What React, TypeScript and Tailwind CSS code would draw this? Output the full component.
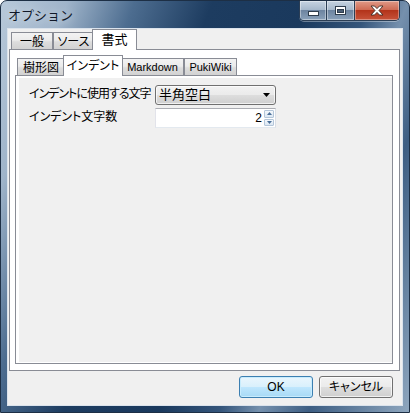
import type { ReactNode } from 'react'

function CaptionButtons() {
  return (
    <div className="mr-[9px] flex h-[20px] overflow-hidden rounded-b-[5px] border border-t-0 border-[#2b3e55] shadow-[0_1px_0_rgba(255,255,255,0.35)]">
      <div className="flex w-[27px] items-center justify-center border-r border-[#2b3e55] bg-[linear-gradient(#c6d3e1_0%,#a7b9cc_45%,#6d84a0_50%,#8aa1ba_100%)] shadow-[inset_0_0_0_1px_rgba(255,255,255,0.4)]">
        <svg width="11" height="5" viewBox="0 0 11 5" className="mt-[5px]">
          <rect x="0.5" y="0.5" width="10" height="4" fill="#fff" stroke="#2f3d4d" />
        </svg>
      </div>
      <div className="flex w-[28px] items-center justify-center border-r border-[#2b3e55] bg-[linear-gradient(#c6d3e1_0%,#a7b9cc_45%,#6d84a0_50%,#8aa1ba_100%)] shadow-[inset_0_0_0_1px_rgba(255,255,255,0.4)]">
        <svg width="11" height="9" viewBox="0 0 11 9">
          <rect x="0.5" y="0.5" width="10" height="8" fill="#fff" stroke="#2f3d4d" />
          <rect x="2.5" y="3.5" width="6" height="3" fill="#4a5d74" stroke="#2f3d4d" />
        </svg>
      </div>
      <div className="flex w-[44px] items-center justify-center bg-[linear-gradient(#e09a88_0%,#cf6c55_45%,#b3341b_50%,#c7533a_100%)] shadow-[inset_0_0_0_1px_rgba(255,255,255,0.35)]">
        <svg width="14" height="11" viewBox="0 0 14 11">
          <path
            d="M1 1h3.5L7 3.6 9.5 1H13L9 5.5 13 10H9.5L7 7.4 4.5 10H1L5 5.5z"
            fill="#fff"
            stroke="#3c2a24"
            strokeWidth="0.9"
            strokeLinejoin="round"
          />
        </svg>
      </div>
    </div>
  )
}

function Tab({ label, width, selected, big, latin }: { label: string; width: number; selected?: boolean; big?: boolean; latin?: boolean }) {
  const size = big ? 'text-[13px]' : latin ? 'text-[11px]' : 'text-[12px]'
  if (selected) {
    return (
      <div
        className="relative z-10 -mx-[2px] -mb-px flex h-[21px] shrink-0 items-center justify-center border border-b-0 border-[#898c95] bg-white"
        style={{ width: width + 4 }}
      >
        <span className={size}>{label}</span>
      </div>
    )
  }
  return (
    <div
      className="flex h-[17px] shrink-0 items-center justify-center border border-b-0 border-[#898c95] bg-[linear-gradient(#f3f3f3_0%,#ebebeb_45%,#dddddd_55%,#d2d2d2_100%)] pt-px"
      style={{ width }}
    >
      <span className={size}>{label}</span>
    </div>
  )
}

function Button({ children, primary }: { children: ReactNode; primary?: boolean }) {
  return (
    <div
      className={
        primary
          ? 'flex h-[22px] w-[74px] items-center justify-center rounded-[3px] border border-[#3c7fb1] bg-[linear-gradient(#eaf6fd_0%,#d9f0fc_48%,#bee6fd_52%,#a7d9f5_100%)] text-[12px] shadow-[inset_0_0_0_1px_#c8ecfd]'
          : 'flex h-[22px] w-[74px] items-center justify-center rounded-[3px] border border-[#707070] bg-[linear-gradient(#f2f2f2_0%,#ebebeb_48%,#dddddd_52%,#cfcfcf_100%)] text-[12px] shadow-[inset_0_0_0_1px_rgba(255,255,255,0.7)]'
      }
    >
      {children}
    </div>
  )
}

export default function App() {
  return (
    <div className="flex h-[413px] w-[410px] flex-col overflow-hidden rounded-t-[7px] border border-[#1d2f45] bg-[linear-gradient(110deg,#b8c9da_0%,#9fb4ca_12%,#4d6d90_24%,#1d3c60_38%,#1a395d_55%,#34557b_66%,#7590ad_73%,#3d5e83_82%,#8ea6be_100%)] font-['Liberation_Sans','Noto_Sans_CJK_JP',sans-serif] text-[#000] [font-feature-settings:'palt']">
      {/* title bar */}
      <div className="flex h-[27px] shrink-0 items-start justify-between">
        <span className="ml-[7px] mt-[7px] text-[13px] leading-[16px] text-[#101828] [font-feature-settings:normal] [text-shadow:0_0_8px_rgba(255,255,255,0.8)]">
          オプション
        </span>
        <CaptionButtons />
      </div>

      {/* client */}
      <div className="mx-[6px] flex h-[378px] shrink-0 flex-col border border-[#dbe3ec] bg-[#f0f0f0]">
        {/* outer tab control */}
        <div className="ml-px mr-[2px] flex flex-col pt-px">
          <div className="flex h-[19px] items-end pl-[2px]">
            <Tab label="一般" width={42} />
            <Tab label="ソース" width={41} />
            <Tab label="書式" width={41} selected big />
          </div>
          <div className="flex h-[322px] flex-col border border-[#898c95] bg-white pb-[6px] pl-[5px] pr-[6px] pt-[5px]">
            {/* inner tab control */}
            <div className="flex h-[20px] items-end pl-[2px]">
              <Tab label="樹形図" width={48} />
              <Tab label="インデント" width={56} selected />
              <Tab label="Markdown" width={63} latin />
              <Tab label="PukiWiki" width={53} latin />
            </div>
            <div className="flex flex-1 flex-col border border-[#898c95] bg-white pb-px pl-[3px] pt-[2px]">
              <div className="flex-1 bg-[#f0f0f0] pl-[10px] pt-[7px]">
                <div className="grid grid-cols-[126px_121px] items-start gap-y-[3px] text-[12px]">
                  <span className="whitespace-nowrap pt-[1px] leading-[16px] tracking-[-1px]">インデントに使用する文字</span>
                  <div className="flex h-[20px] items-center justify-between rounded-[3px] border border-[#707070] bg-[linear-gradient(#f2f2f2_0%,#ebebeb_48%,#dddddd_52%,#cfcfcf_100%)] pl-[3px] pr-[5px] shadow-[inset_0_0_0_1px_rgba(255,255,255,0.7)]">
                    <span className="text-[13px] leading-[16px]">半角空白</span>
                    <svg width="7" height="4" viewBox="0 0 7 4">
                      <path d="M0 0h7L3.5 4z" fill="#000" />
                    </svg>
                  </div>
                  <span className="whitespace-nowrap pt-[1px] leading-[16px]">インデント文字数</span>
                  <div className="flex h-[20px] items-stretch border border-[#abadb3] border-l-[#e2e3ea] border-r-[#dbdfe6] border-b-[#e3e9ef] bg-white">
                    <span className="flex flex-1 items-center justify-end pr-[2px] text-[12px]">2</span>
                    <div className="flex w-[11px] flex-col gap-px py-px pr-px">
                      <div className="flex flex-1 items-center justify-center rounded-[1px] border border-[#b4c6d9] bg-[linear-gradient(#f4f8fc,#dbe7f3)]">
                        <svg width="5" height="3" viewBox="0 0 5 3">
                          <path d="M2.5 0L5 3H0z" fill="#4a6f99" />
                        </svg>
                      </div>
                      <div className="flex flex-1 items-center justify-center rounded-[1px] border border-[#b4c6d9] bg-[linear-gradient(#f4f8fc,#dbe7f3)]">
                        <svg width="5" height="3" viewBox="0 0 5 3">
                          <path d="M0 0h5L2.5 3z" fill="#4a6f99" />
                        </svg>
                      </div>
                    </div>
                  </div>
                </div>
              </div>
            </div>
          </div>
        </div>

        {/* dialog buttons */}
        <div className="mt-[5px] flex justify-end gap-[6px] pr-[9px]">
          <Button primary>OK</Button>
          <Button>キャンセル</Button>
        </div>
      </div>
    </div>
  )
}
